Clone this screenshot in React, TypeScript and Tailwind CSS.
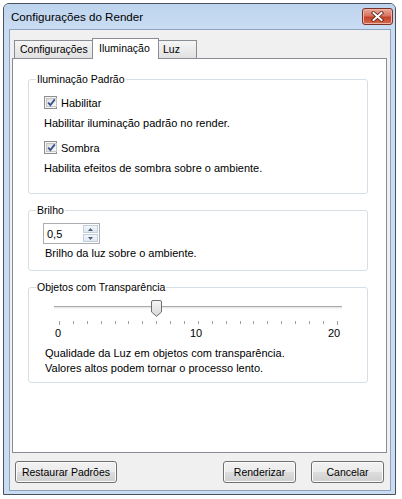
import React from "react";

function Check() {
  return (
    <span className="w-[13px] h-[13px] border border-[#8e8f8f] bg-[#f4f4f4] p-[1px] flex shrink-0">
      <span className="flex-1 border border-[#c4c6ca] bg-gradient-to-br from-[#dcdee2] to-[#f7f8f9] flex items-center justify-center">
        <svg width="9" height="9" viewBox="0 0 9 9">
          <path d="M1.2 4.6 L3.4 7 L7.8 1.4" fill="none" stroke="#3d5189" strokeWidth="1.8" />
        </svg>
      </span>
    </span>
  );
}

function Btn({ label, w }: { label: string; w: string }) {
  return (
    <button
      className={`${w} h-[22px] border border-[#707070] rounded-[3px] shadow-[inset_0_0_0_1px_#fbfbfb] bg-[linear-gradient(to_bottom,#f2f2f2_0%,#ebebeb_50%,#dddddd_50%,#cfcfcf_100%)] text-[10.5px] leading-[20px] text-black`}
    >
      {label}
    </button>
  );
}

function Group({
  title,
  mt,
  children,
}: {
  title: string;
  mt: string;
  children: React.ReactNode;
}) {
  return (
    <fieldset className={`${mt} ml-[15px] w-[340px] border border-[#d5dfe5] rounded-[3px] p-0`}>
      <legend className="ml-[7px] px-[1px] text-[10.5px] leading-[14px]">{title}</legend>
      {children}
    </fieldset>
  );
}

export default function App() {
  const ticks = Array.from({ length: 21 }, (_, i) => i);
  return (
    <div className="w-[402px] h-[499px] bg-white pt-[3px] pl-[3px] font-['Liberation_Sans',Arial,sans-serif] text-[11px] text-black">
      <div className="w-[393px] h-[492px] border border-[#4a525d] rounded-t-[6px] bg-[#c9dcf2] flex flex-col">
        {/* title bar */}
        <div className="h-[25px] flex items-start justify-between rounded-t-[5px] bg-gradient-to-b from-[#bed4ee] to-[#c9dcf2]">
          <span className="pl-[7px] text-[11.6px] leading-[25px]">Configurações do Render</span>
          <button className="mt-[4px] mr-[2px] w-[31px] h-[17px] rounded-[3px] border border-[#7c3026] bg-[linear-gradient(to_bottom,#e9a99c_0%,#d8745f_45%,#c5432a_55%,#d66a4d_100%)] shadow-[inset_0_0_0_1px_#eeb3a6] flex items-center justify-center">
            <svg width="13" height="11" viewBox="0 0 13 11">
              <path d="M2.5 2 L10.5 9 M10.5 2 L2.5 9" stroke="#5b1d14" strokeWidth="3.6" strokeLinecap="square" />
              <path d="M2.5 2 L10.5 9 M10.5 2 L2.5 9" stroke="#ffffff" strokeWidth="2" strokeLinecap="square" />
            </svg>
          </button>
        </div>

        {/* client area */}
        <div className="ml-[5px] w-[382px] h-[462px] border border-[#8ea3bd] bg-[#f0f0f0] flex flex-col">
          {/* tabs */}
          <div className="mt-[8px] ml-[4px] h-[20px] flex items-end text-[10.5px]">
            <div className="w-[78px] h-[18px] border-l border-t border-[#898c95] bg-gradient-to-b from-[#f5f5f5] to-[#e1e1e1] pl-[5px] leading-[17px]">
              Configurações
            </div>
            <div className="relative z-10 w-[67px] h-[21px] -mb-px border-l border-t border-r border-[#898c95] bg-white pl-[6px] leading-[19px]">
              Iluminação
            </div>
            <div className="w-[38px] h-[18px] border-t border-r border-[#898c95] bg-gradient-to-b from-[#f5f5f5] to-[#e1e1e1] pl-[4px] leading-[17px]">
              Luz
            </div>
          </div>

          {/* panel */}
          <div className="ml-[2px] w-[375px] h-[395px] border border-[#898c95] bg-white flex flex-col">
            <Group title="Iluminação Padrão" mt="mt-[13px]">
              <div className="pl-[15px] pt-[10px] pb-[18px] flex flex-col">
                <div className="h-[13px] flex items-center gap-[4px]">
                  <Check />
                  <span className="leading-[14px]">Habilitar</span>
                </div>
                <p className="mt-[7px] leading-[14px]">Habilitar iluminação padrão no render.</p>
                <div className="mt-[11px] h-[13px] flex items-center gap-[4px]">
                  <Check />
                  <span className="leading-[14px]">Sombra</span>
                </div>
                <p className="mt-[7px] leading-[14px]">Habilita efeitos de sombra sobre o ambiente.</p>
              </div>
            </Group>

            <Group title="Brilho" mt="mt-[9px]">
              <div className="pt-[6px] pb-[10px] flex flex-col">
                <div className="ml-[14px] w-[57px] h-[21px] border border-[#abadb3] bg-white flex items-center justify-between pl-[3px] pr-[1px]">
                  <span className="leading-[14px]">0,5</span>
                  <div className="w-[15px] flex flex-col gap-px">
                    <div className="h-[8px] border border-[#c3cedc] bg-gradient-to-b from-[#f3f6fa] to-[#dfe7f0] flex items-center justify-center">
                      <svg width="5" height="3" viewBox="0 0 5 3">
                        <path d="M0 3 L2.5 0 L5 3 Z" fill="#4c5d7e" />
                      </svg>
                    </div>
                    <div className="h-[8px] border border-[#c3cedc] bg-gradient-to-b from-[#f3f6fa] to-[#dfe7f0] flex items-center justify-center">
                      <svg width="5" height="3" viewBox="0 0 5 3">
                        <path d="M0 0 L2.5 3 L5 0 Z" fill="#4c5d7e" />
                      </svg>
                    </div>
                  </div>
                </div>
                <p className="ml-[16px] mt-[2px] leading-[14px]">Brilho da luz sobre o ambiente.</p>
              </div>
            </Group>

            <Group title="Objetos com Transparência" mt="mt-[9px]">
              <div className="pt-[6px] pb-[6px] flex flex-col">
                <div className="relative ml-[25px] w-[288px] h-[17px]">
                  <div className="mt-[6px] h-[3px] border-t border-[#a9a9a9] border-b border-b-[#f4f4f4] bg-[#e6e8ea]" />
                  <svg className="absolute top-0 left-[97px]" width="11" height="17" viewBox="0 0 11 17">
                    <defs>
                      <linearGradient id="th" x1="0" y1="0" x2="0" y2="1">
                        <stop offset="0" stopColor="#f6f6f6" />
                        <stop offset="1" stopColor="#d6d6d6" />
                      </linearGradient>
                    </defs>
                    <path
                      d="M0.5 2 Q0.5 0.5 2 0.5 H9 Q10.5 0.5 10.5 2 V12 L5.5 16.3 L0.5 12 Z"
                      fill="url(#th)"
                      stroke="#6f6f6f"
                    />
                  </svg>
                </div>
                <div className="ml-[30px] mt-[4px] w-[279px] h-[4px] flex justify-between items-start">
                  {ticks.map((t) => (
                    <span
                      key={t}
                      className={`w-px ${t === 0 || t === 20 ? "h-[4px]" : "h-[3px]"} bg-[#a0a0a0]`}
                    />
                  ))}
                </div>
                <div className="ml-[19px] mt-[1px] w-[296px] flex justify-between leading-[14px]">
                  <span className="w-[20px] text-center">0</span>
                  <span className="w-[20px] text-center">10</span>
                  <span className="w-[20px] text-center">20</span>
                </div>
                <p className="ml-[16px] mt-[6px] leading-[15px]">
                  Qualidade da Luz em objetos com transparência.
                  <br />
                  Valores altos podem tornar o processo lento.
                </p>
              </div>
            </Group>
          </div>

          {/* buttons */}
          <div className="mt-[8px] pl-[5px] pr-[6px] flex items-center">
            <Btn label="Restaurar Padrões" w="w-[102px]" />
            <div className="flex-1" />
            <Btn label="Renderizar" w="w-[73px]" />
            <div className="w-[15px]" />
            <Btn label="Cancelar" w="w-[73px]" />
          </div>
        </div>
      </div>
    </div>
  );
}
